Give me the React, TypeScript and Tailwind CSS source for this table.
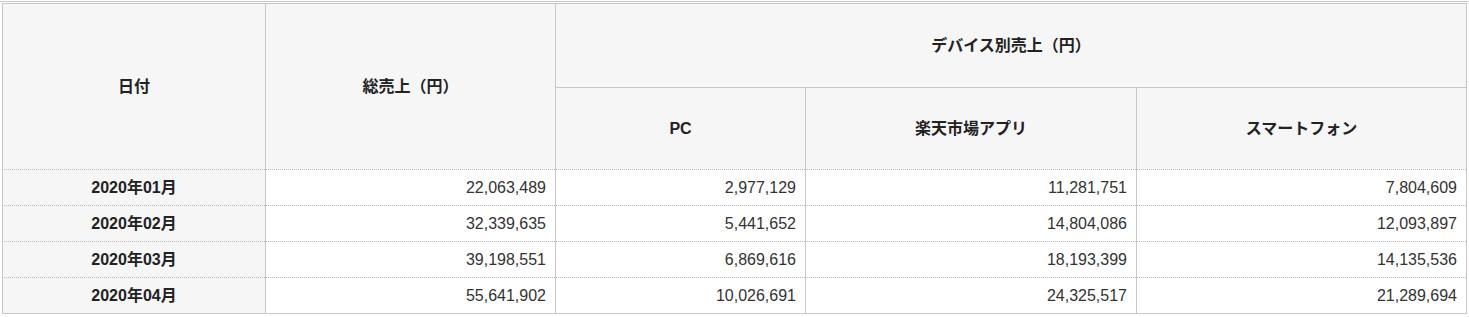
import React from "react";

const rows = [
  ["2020年01月", "22,063,489", "2,977,129", "11,281,751", "7,804,609"],
  ["2020年02月", "32,339,635", "5,441,652", "14,804,086", "12,093,897"],
  ["2020年03月", "39,198,551", "6,869,616", "18,193,399", "14,135,536"],
  ["2020年04月", "55,641,902", "10,026,691", "24,325,517", "21,289,694"],
];

export default function App() {
  const font = { fontFamily: '"Liberation Sans", Arial, "Noto Sans CJK JP", sans-serif' };
  return (
    <div className="w-[1469px] h-[317px] bg-white pt-[1px] text-[16px] leading-none text-[#333]" style={font}>
      <div className="border-t border-[#c8c8c8] mr-[1px]" />
      <div className="pl-[2px] pt-[1px]">
        <div className="grid grid-cols-[263px_290px_250px_331px_330px] grid-rows-[84px_82px_36px_36px_36px_36px] w-[1465px] border-r border-b border-[#c8c8c8]">
          <div className="row-span-2 col-start-1 row-start-1 bg-[#f6f6f6] border-l border-t border-[#c8c8c8] flex items-center justify-center font-bold text-[#222]">日付</div>
          <div className="row-span-2 col-start-2 row-start-1 bg-[#f6f6f6] border-l border-t border-[#c8c8c8] flex items-center justify-center font-bold text-[#222]">総売上（円）</div>
          <div className="col-span-3 col-start-3 row-start-1 bg-[#f6f6f6] border-l border-t border-[#c8c8c8] flex items-center justify-center font-bold text-[#222]">デバイス別売上（円）</div>
          <div className="col-start-3 row-start-2 bg-[#f6f6f6] border-l border-t border-[#c8c8c8] flex items-center justify-center font-bold text-[#222]">PC</div>
          <div className="col-start-4 row-start-2 bg-[#f6f6f6] border-l border-t border-[#c8c8c8] flex items-center justify-center font-bold text-[#222]">楽天市場アプリ</div>
          <div className="col-start-5 row-start-2 bg-[#f6f6f6] border-l border-t border-[#c8c8c8] flex items-center justify-center font-bold text-[#222]">スマートフォン</div>
          {rows.map((r) => (
            <React.Fragment key={r[0]}>
              <div className="bg-[#f6f6f6] border-l border-l-[#c8c8c8] border-t border-t-[#b8b8b8] border-dotted [border-left-style:solid] flex items-center justify-center font-bold text-[#222]">{r[0]}</div>
              {r.slice(1).map((v, i) => (
                <div key={i} className="bg-white border-l border-l-[#c8c8c8] border-t border-t-[#b8b8b8] border-dotted [border-left-style:solid] flex items-center justify-end pr-[9px]">{v}</div>
              ))}
            </React.Fragment>
          ))}
        </div>
      </div>
    </div>
  );
}
